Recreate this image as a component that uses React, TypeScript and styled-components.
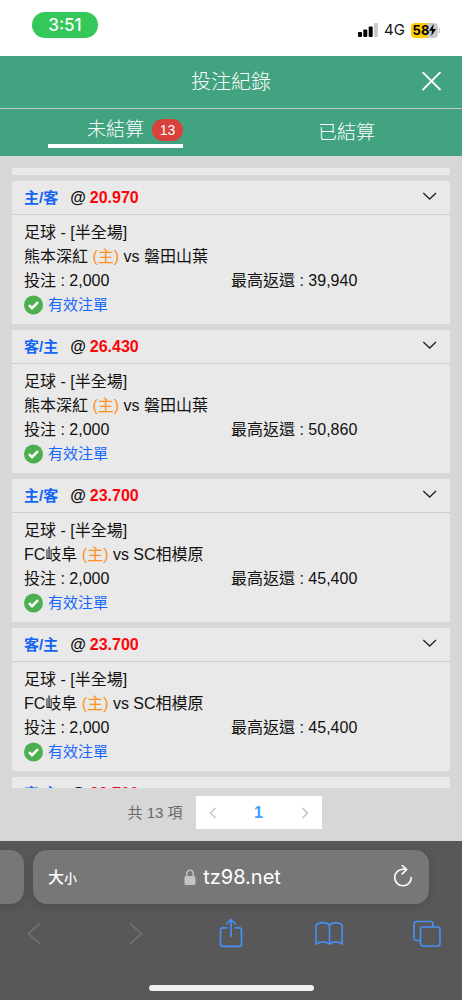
import React, { useLayoutEffect, useRef, useState } from "react";
import styled, { createGlobalStyle } from "styled-components";

const GlobalStyle = createGlobalStyle`
  * { box-sizing: border-box; }
  body { margin: 0; background: #585858; }
  button { border: 0; padding: 0; margin: 0; background: none; font: inherit; color: inherit; cursor: pointer; }
  svg { display: block; }
`;

const web = `"Liberation Sans", "Noto Sans CJK TC", sans-serif`;
const system = `Inter, "Noto Sans CJK TC", sans-serif`;

const Screen = styled.div`
  display: flex;
  flex-direction: column;
  height: 100vh;
  background: #d7d7d7;
  font-family: ${web};
  font-size: 16px;
  line-height: 24px;
  color: #111;
`;

const StatusBar = styled.div`
  display: flex;
  flex: none;
  justify-content: space-between;
  align-items: flex-start;
  height: 56px;
  padding: 12px 22px 0 32px;
  background: #fff;
  font-family: ${system};
`;

const Clock = styled.div`
  width: 66px;
  border-radius: 13px;
  background: #34c759;
  color: #fff;
  font-size: 17px;
  font-weight: 500;
  line-height: 26px;
  text-align: center;
`;

const StatusIcons = styled.div`
  display: flex;
  align-items: center;
  gap: 6px;
  padding-top: 8px;
  font-size: 15px;
  line-height: 20px;
`;

const BatteryWrap = styled.div`
  display: flex;
  align-items: center;
  gap: 1px;
`;

const Battery = styled.div`
  display: flex;
  align-items: center;
  justify-content: center;
  width: 27px;
  height: 15px;
  border-radius: 4px;
  background: linear-gradient(to right, #ffcc00 58%, #c9c8cc 58%);
  color: #000;
  font-size: 13px;
  font-weight: 700;
  line-height: 15px;
`;

const BatteryTip = styled.span`
  width: 1px;
  height: 5px;
  background: #c9c8cc;
`;

const Header = styled.header`
  display: grid;
  flex: none;
  grid-template-columns: 44px 1fr 44px;
  align-items: center;
  height: 53px;
  padding: 0 8px;
  border-bottom: 1px solid #c4c9c7;
  background: #41a380;
  color: #fff;
`;

const Title = styled.h1`
  grid-column: 2;
  margin: 0;
  font-size: 20px;
  font-weight: 300;
  line-height: 28px;
  text-align: center;
`;

const CloseButton = styled.button`
  display: grid;
  place-items: center;
  height: 44px;
`;

const Tabs = styled.div`
  display: grid;
  flex: none;
  grid-template-columns: 1fr 1fr;
  justify-items: center;
  align-items: center;
  height: 47px;
  background: #41a380;
`;

const Tab = styled.button<{ $active: boolean }>`
  display: grid;
  grid-template-columns: 1fr auto 1fr;
  align-items: center;
  width: 135px;
  margin-bottom: ${(p) => (p.$active ? "2px" : "0")};
  border-bottom: ${(p) => (p.$active ? "4px solid #fff" : "0")};
  color: #fff;
  font-size: 19px;
  font-weight: 300;
  line-height: 28px;
`;

const TabLabel = styled.span`
  grid-column: 2;
`;

const Badge = styled.span`
  justify-self: end;
  width: 31px;
  border-radius: 11px;
  background: #d9423c;
  font-size: 14px;
  line-height: 22px;
  text-align: center;
`;

const List = styled.main`
  display: flex;
  flex: 1;
  flex-direction: column;
  gap: 6px;
  min-height: 0;
  margin: 12px 12px 0;
  overflow-y: auto;
  scrollbar-width: none;
`;

const Card = styled.article`
  flex: none;
  background: #e9e9e9;
`;

const CardHeader = styled.div`
  display: flex;
  align-items: center;
  height: 34px;
  padding: 0 12px;
  border-bottom: 1px solid #cecece;
  font-weight: 700;
`;

const Pick = styled.span`
  margin-right: 12px;
  color: #1464f6;
  font-size: 15px;
`;

const Odds = styled.span`
  margin-left: 4px;
  color: #fb0509;
`;

const Toggle = styled.button`
  margin-left: auto;
`;

const CardBody = styled.div`
  padding: 6px 12px 7px;
`;

const Home = styled.span`
  color: #ff9020;
`;

const Amounts = styled.div`
  display: grid;
  grid-template-columns: 1fr 1fr;
`;

const Valid = styled.div`
  display: flex;
  align-items: center;
  gap: 5px;
  color: #1667fa;
  font-size: 15px;
`;

const Pager = styled.nav`
  display: flex;
  flex: none;
  justify-content: center;
  align-items: center;
  gap: 13px;
  height: 53px;
  padding: 0 13px 4px 0;
  color: #65676b;
  font-size: 15px;
`;

const Pages = styled.div`
  display: grid;
  grid-template-columns: 34px 58px 34px;
  justify-items: center;
  align-items: center;
  height: 33px;
  background: #fff;
`;

const PageNumber = styled.button`
  color: #409eff;
  font-size: 16px;
  font-weight: 700;
`;

const Browser = styled.footer`
  flex: none;
  padding-bottom: 9px;
  background: #585858;
  font-family: ${system};
`;

const AddressRow = styled.div`
  display: flex;
  gap: 9px;
  padding: 9px 33px 0 0;
`;

const PreviousTab = styled.div`
  width: 24px;
  height: 54px;
  border-radius: 0 14px 14px 0;
  background: #777;
  box-shadow: 0 2px 10px rgba(0, 0, 0, 0.14);
`;

const AddressBar = styled.div`
  display: grid;
  flex: 1;
  grid-template-columns: 50px 1fr 46px;
  align-items: center;
  height: 54px;
  padding: 0 16px 0 15px;
  border-radius: 14px;
  background: #777;
  box-shadow: 0 2px 10px rgba(0, 0, 0, 0.14);
  color: #fff;
`;

const TextSize = styled.button`
  justify-self: start;
  font-size: 16px;
  font-weight: 500;
`;

const SmallGlyph = styled.span`
  font-size: 13px;
`;

const Address = styled.button`
  display: flex;
  justify-content: center;
  align-items: center;
  gap: 7px;
  font-size: 20px;
`;

const Reload = styled.button`
  justify-self: end;
`;

const Toolbar = styled.div`
  display: flex;
  justify-content: space-between;
  padding: 14px 21px 0 19px;
  color: #478ff5;
`;

const ToolButton = styled.button`
  width: 28px;
  height: 32px;

  &:disabled {
    color: #747474;
  }
`;

const HomeIndicator = styled.div`
  width: 165px;
  height: 6px;
  margin: 35px auto 0;
  border-radius: 3px;
  background: #f0f0f0;
`;

type Bet = { pick: string; odds: string; home: string; away: string; payout: string };

const bets: Bet[] = [
  { pick: "客/主", odds: "20.970", home: "熊本深紅", away: "磐田山葉", payout: "39,940" },
  { pick: "主/客", odds: "20.970", home: "熊本深紅", away: "磐田山葉", payout: "39,940" },
  { pick: "客/主", odds: "26.430", home: "熊本深紅", away: "磐田山葉", payout: "50,860" },
  { pick: "主/客", odds: "23.700", home: "FC岐阜", away: "SC相模原", payout: "45,400" },
  { pick: "客/主", odds: "23.700", home: "FC岐阜", away: "SC相模原", payout: "45,400" },
  { pick: "客/主", odds: "23.700", home: "FC岐阜", away: "SC相模原", payout: "45,400" },
];

function Chevron({ direction }: { direction: "left" | "right" }) {
  return (
    <svg width="10" height="14" viewBox="0 0 10 14" fill="none" stroke="#c0c4cc" strokeWidth="1.5">
      <path d={direction === "left" ? "M7.5 2 2.5 7l5 5" : "M2.5 2l5 5-5 5"} />
    </svg>
  );
}

function BetCard({ bet }: { bet: Bet }) {
  return (
    <Card>
      <CardHeader>
        <Pick>{bet.pick}</Pick>@<Odds>{bet.odds}</Odds>
        <Toggle aria-label="收合">
          <svg width="17" height="16" viewBox="0 0 17 16" fill="none" stroke="#222" strokeWidth="1.3">
            <path d="M2.300 3 8.700 9l6.300-6" />
          </svg>
        </Toggle>
      </CardHeader>
      <CardBody>
        <div>足球 - [半全場]</div>
        <div>
          {bet.home} <Home>(主)</Home> vs {bet.away}
        </div>
        <Amounts>
          <span>投注 : 2,000</span>
          <span>最高返還 : {bet.payout}</span>
        </Amounts>
        <Valid>
          <svg width="19" height="20" viewBox="0 0 19 20">
            <circle cx="9.500" cy="10" r="9.500" fill="#4caf50" />
            <path d="M5 10.200l3 3 6-6" fill="none" stroke="#fff" strokeWidth="2.600" />
          </svg>
          有效注單
        </Valid>
      </CardBody>
    </Card>
  );
}

export default function App() {
  const list = useRef<HTMLElement>(null);
  const [tab, setTab] = useState<"open" | "settled">("open");

  // Open the list with only the end of the first bet in view.
  useLayoutEffect(() => {
    if (list.current) list.current.scrollTop = 136;
  }, []);

  return (
    <>
      <GlobalStyle />
      <Screen>
        <StatusBar>
          <Clock>3:51</Clock>
          <StatusIcons>
            <svg width="20" height="14" viewBox="0 0 20 14">
              <rect x="0" y="9" width="4" height="5" rx="1" fill="#000" />
              <rect x="5.300" y="6.500" width="4" height="7.500" rx="1" fill="#000" />
              <rect x="10.700" y="3.500" width="4" height="10.500" rx="1" fill="#000" />
              <rect x="16" y="0" width="4" height="14" rx="1" fill="#cbcbcd" />
            </svg>
            4G
            <BatteryWrap>
              <Battery>
                58
                <svg width="7" height="12" viewBox="0 0 7 12">
                  <path d="M4.500 0 0 6.800h3L2.300 12 7 5H4z" fill="#000" />
                </svg>
              </Battery>
              <BatteryTip />
            </BatteryWrap>
          </StatusIcons>
        </StatusBar>

        <Header>
          <Title>投注紀錄</Title>
          <CloseButton aria-label="關閉">
            <svg width="20" height="20" viewBox="0 0 20 20" fill="none" stroke="#fff" strokeWidth="1.800">
              <path d="M.5 0l18 18M18.500 0l-18 18" />
            </svg>
          </CloseButton>
        </Header>

        <Tabs role="tablist">
          <Tab role="tab" aria-selected={tab === "open"} $active={tab === "open"} onClick={() => setTab("open")}>
            <TabLabel>未結算</TabLabel>
            <Badge>13</Badge>
          </Tab>
          <Tab role="tab" aria-selected={tab === "settled"} $active={tab === "settled"} onClick={() => setTab("settled")}>
            <TabLabel>已結算</TabLabel>
          </Tab>
        </Tabs>

        <List ref={list}>
          {bets.map((bet, i) => (
            <BetCard key={i} bet={bet} />
          ))}
        </List>

        <Pager aria-label="分頁">
          <span>共 13 項</span>
          <Pages>
            <button aria-label="上一頁">
              <Chevron direction="left" />
            </button>
            <PageNumber>1</PageNumber>
            <button aria-label="下一頁">
              <Chevron direction="right" />
            </button>
          </Pages>
        </Pager>

        <Browser>
          <AddressRow>
            <PreviousTab />
            <AddressBar>
              <TextSize>
                大<SmallGlyph>小</SmallGlyph>
              </TextSize>
              <Address>
                <svg width="12" height="17" viewBox="0 0 12 17">
                  <path d="M2.800 8V4.500a3.200 3.200 0 0 1 6.400 0V8" fill="none" stroke="#c3c2c9" strokeWidth="1.500" />
                  <rect x="0.500" y="7" width="11" height="9" rx="1.500" fill="#c3c2c9" />
                </svg>
                tz98.net
              </Address>
              <Reload aria-label="重新載入">
                <svg width="20" height="24" viewBox="0 0 20 24" fill="none" stroke="#fff" strokeWidth="1.600" strokeLinecap="round" strokeLinejoin="round">
                  <path d="M18.300 12.500A8.300 8.300 0 1 1 10 4.200h3.500M9.200 .500l4.500 4-4.500 4.300" />
                </svg>
              </Reload>
            </AddressBar>
          </AddressRow>
          <Toolbar>
            <ToolButton disabled aria-label="上一頁">
              <svg width="28" height="32" viewBox="0 0 28 32" fill="none" stroke="currentColor" strokeWidth="1.500">
                <path d="M21 5.500 9.500 15.800 21 26" />
              </svg>
            </ToolButton>
            <ToolButton disabled aria-label="下一頁">
              <svg width="28" height="32" viewBox="0 0 28 32" fill="none" stroke="currentColor" strokeWidth="1.500">
                <path d="M12 5.500 23.500 15.800 12 26" />
              </svg>
            </ToolButton>
            <ToolButton aria-label="分享">
              <svg width="28" height="32" viewBox="0 0 28 32" fill="none" stroke="currentColor" strokeWidth="1.700" strokeLinecap="round" strokeLinejoin="round">
                <path d="M10.500 9.800H6.500a2 2 0 0 0-2 2v14.500a2 2 0 0 0 2 2h17a2 2 0 0 0 2-2V11.800a2 2 0 0 0-2-2h-4M15 18.500V1.500M10.500 6 15 1.500 19.500 6" />
              </svg>
            </ToolButton>
            <ToolButton aria-label="書籤">
              <svg width="28" height="32" viewBox="0 0 28 32" fill="none" stroke="currentColor" strokeWidth="1.600" strokeLinejoin="round">
                <path d="M14.500 7.200C11.500 3.800 4 3.800 1 7.200v19c4-2.900 9.500-2.900 13.500 0 4-2.900 8.700-2.900 12.700 0v-19c-3-3.400-9.700-3.400-12.700 0zv19" />
              </svg>
            </ToolButton>
            <ToolButton aria-label="分頁總覽">
              <svg width="28" height="32" viewBox="0 0 28 32" fill="none" stroke="currentColor" strokeWidth="1.700" strokeLinejoin="round">
                <path d="M7 22.500H3.500a2.500 2.500 0 0 1-2.500-2.500V6a2.500 2.500 0 0 1 2.500-2.500h14A2.500 2.500 0 0 1 20 6v3" />
                <rect x="7.500" y="9" width="19.500" height="19" rx="2.500" />
              </svg>
            </ToolButton>
          </Toolbar>
          <HomeIndicator />
        </Browser>
      </Screen>
    </>
  );
}
